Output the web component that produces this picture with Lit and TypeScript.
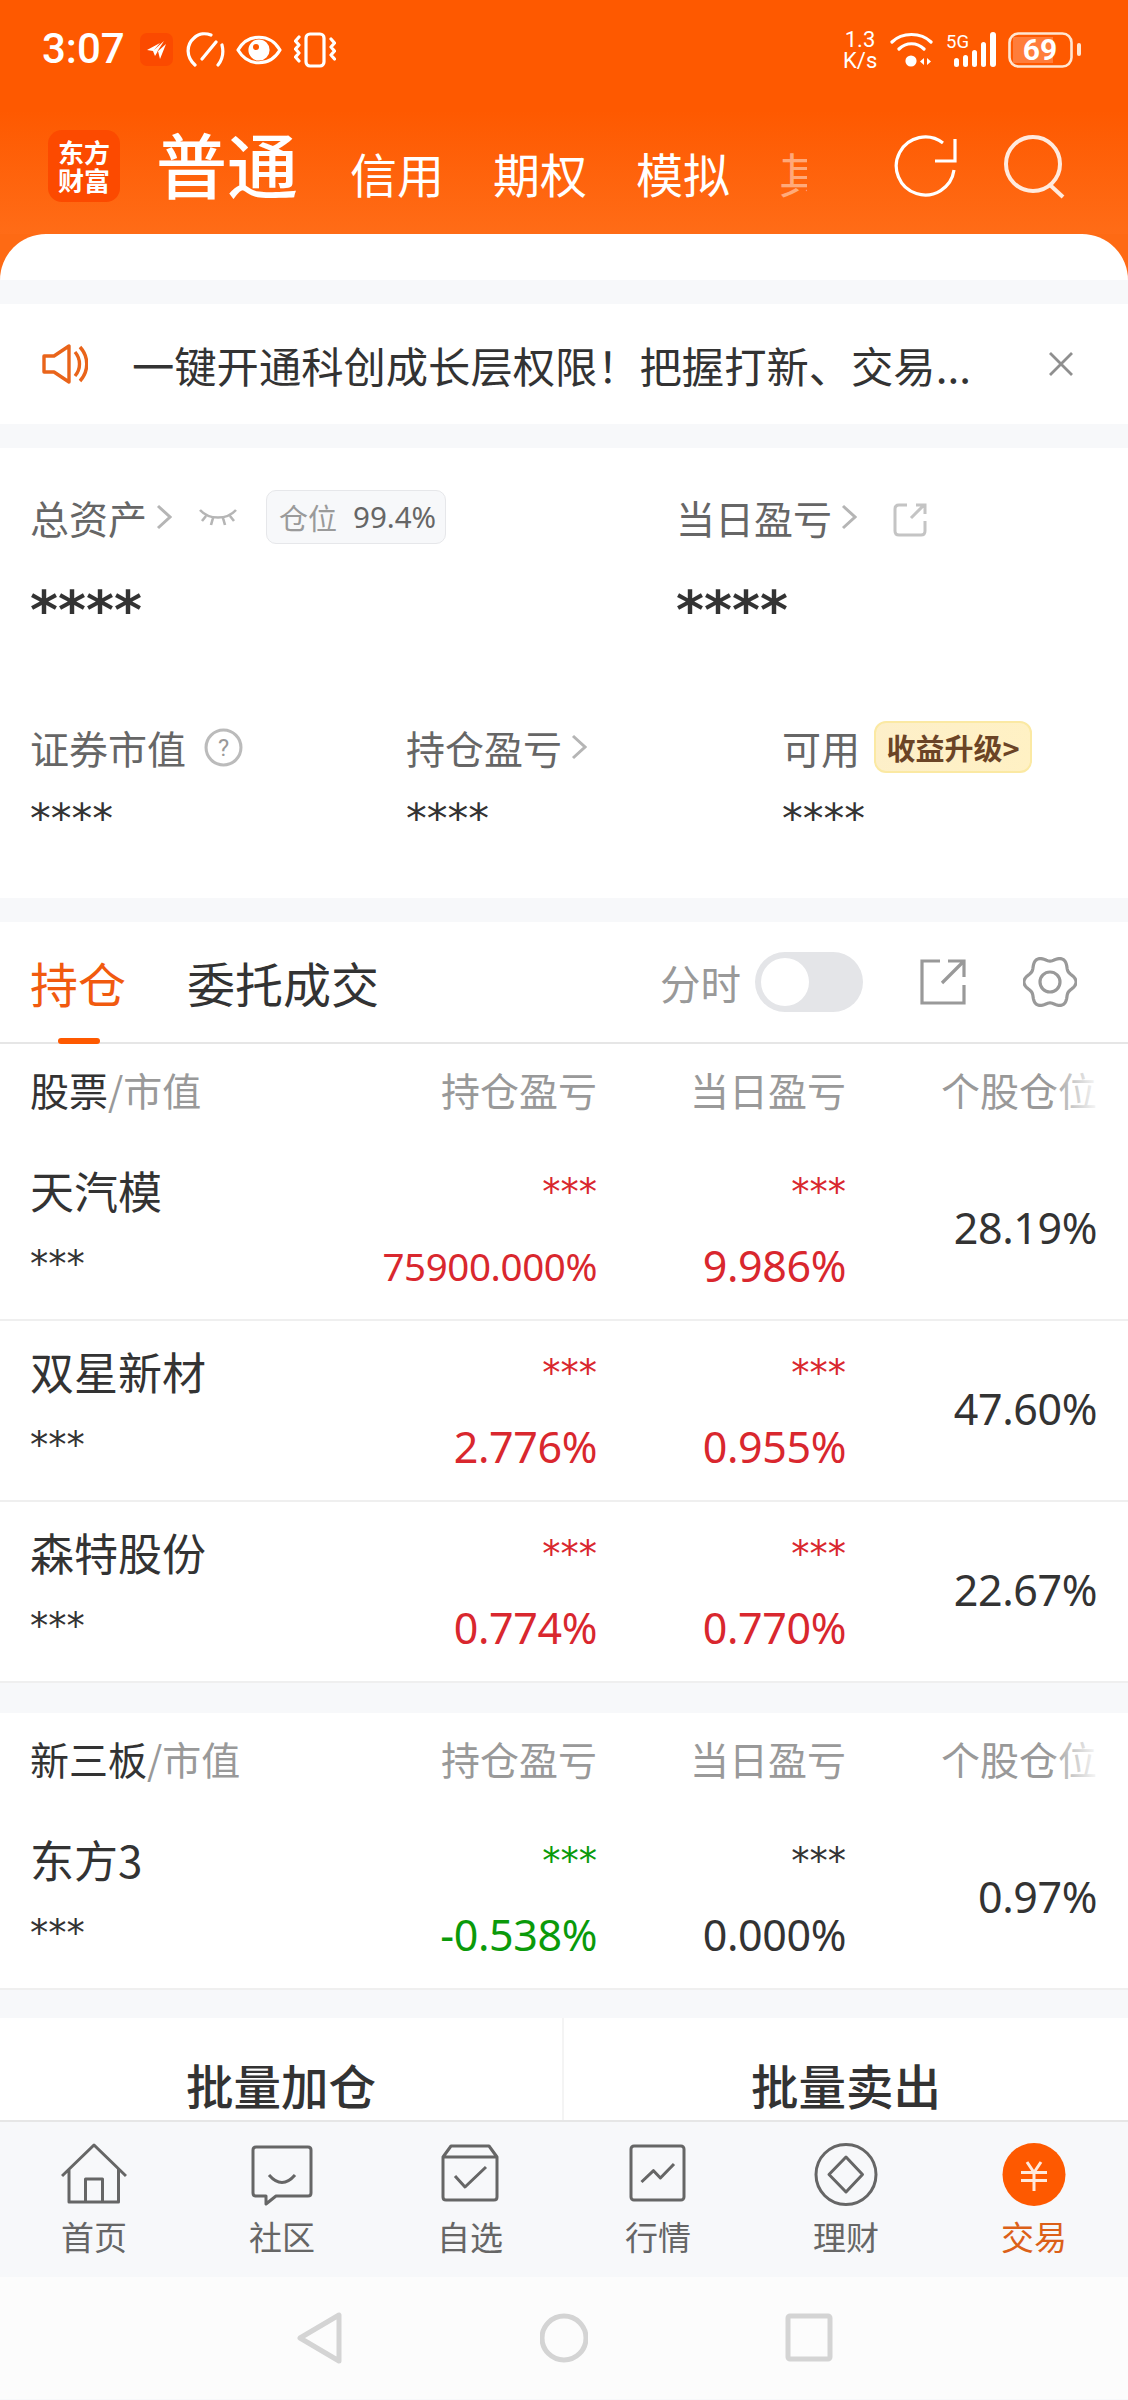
import { LitElement, html, css, svg } from "lit";
import { customElement } from "lit/decorators.js";

const rows1 = [
  { name: "天汽模", a: "75900.000%", b: "9.986%", c: "28.19%", small: true },
  { name: "双星新材", a: "2.776%", b: "0.955%", c: "47.60%" },
  { name: "森特股份", a: "0.774%", b: "0.770%", c: "22.67%" },
];

const chev = html`<svg class="chev" viewBox="0 0 16 26"><path d="M2 2l12 11-12 11" /></svg>`;

const gearPath = (() => {
  const pts: string[] = [];
  for (let i = 0; i < 120; i++) {
    const t = (i / 120) * Math.PI * 2;
    const r = 23.5 - 2.6 * Math.cos(6 * t);
    pts.push(`${(27 + r * Math.sin(t)).toFixed(2)} ${(27 - r * Math.cos(t)).toFixed(2)}`);
  }
  return "M" + pts.join("L") + "Z";
})();

const navIcons = [
  svg`<path d="M1 34L33 3L65 34M8 27V60H57.5V27M24.5 60V37H41.5V60" />`,
  svg`<path d="M7 5H59Q62 5 62 8V51Q62 54 59 54H27L17 62V54H7Q4 54 4 51V8Q4 5 7 5ZM20 33Q33 48 46 33" />`,
  svg`<path d="M6 15L14 4H52L60 15V55Q60 58 57 58H9Q6 58 6 55ZM6 15H60M18 34L28 45L49 25" />`,
  svg`<rect x="6" y="4" width="53" height="54" rx="3"/><path d="M16.5 40L28.5 28.7L35.4 36L49 22" />`,
  svg`<circle cx="33" cy="32.5" r="30" /><path d="M33 15L49.5 32.5L33 50L16 32.5Z" />`,
];

@customElement("app-root")
export class AppRoot extends LitElement {
  static styles = css`
    :host {
      display: block;
      width: 1128px;
      height: 2400px;
      overflow: hidden;
      background: #f7f8fa;
      font-family: "Noto Sans CJK SC", "Noto Sans", sans-serif;
      color: #333;
    }
    svg { display: block; fill: none; }
    .head {
      height: 234px;
      background: linear-gradient(#fe5900 0, #fe5900 110px, #ff6c17 234px);
      display: flex;
      flex-direction: column;
      color: #fff;
    }
    .status {
      height: 100px;
      padding: 32px 47px 0 42px;
      box-sizing: border-box;
      display: flex;
      align-items: flex-start;
    }
    .time { font: 500 42px/34px Roboto, sans-serif; width: 98px; }
    .st-icons { display: flex; align-items: center; gap: 11.5px; height: 35px; }
    .st-right { margin-left: auto; display: flex; align-items: center; gap: 13px; height: 36px; }
    .speed { font: 400 22px/21px Roboto, sans-serif; text-align: center; width: 34px; white-space: nowrap; }
    .squ { width: 33px; height: 33px; background: #fb4a00; border-radius: 7px; display: flex; align-items: center; justify-content: center; }
    .stroke-w { stroke: #fff; stroke-width: 3.2; stroke-linecap: round; stroke-linejoin: round; }
    .tabs {
      flex: 1;
      display: flex;
      align-items: flex-end;
      padding: 0 0 30px 48px;
      position: relative;
    }
    .logo {
      width: 72px; height: 72px; border-radius: 14px; background: #fc4a00;
      font: 700 26px/28px "Noto Sans CJK SC", sans-serif;
      text-align: center; display: flex; align-items: center; justify-content: center;
      margin-bottom: 2px;
      margin-right: 36px;
    }
    .main { font-size: 71px; line-height: 72px; font-weight: 500; margin-right: 50px; margin-bottom: 6px; width: 144px; white-space: nowrap; }
    .t2 { font-size: 47px; line-height: 50px; margin-right: 49px; margin-bottom: 6px; white-space: nowrap; }
    .faded { width: 28px; overflow: hidden; opacity: .45; margin-right: 0; margin-left: 0; }
    .hicons { position: absolute; right: 60px; top: 35px; display: flex; gap: 46px; align-items: center; }
    .cap { height: 46px; background: #fff; border-radius: 46px 46px 0 0; margin-bottom: 24px; }
    .wcap { background: #fe6a14; }

    .notice {
      height: 120px; background: #fff; display: flex; align-items: center;
      padding: 0 53px 0 42px; margin-bottom: 24px;
      font-size: 42.3px; color: #333;
    }
    .notice .txt { margin-left: 44px; flex: 1; white-space: nowrap; }

    .assets { height: 450px; background: #fff; box-sizing: border-box; padding: 44px 30px 0; margin-bottom: 24px; position: relative; }
    .a-top { display: grid; grid-template-columns: 646px 1fr; }
    .lab { display: flex; align-items: center; font-size: 39px; line-height: 50px; color: #666; height: 50px; white-space: nowrap; }
    .chev { width: 16px; height: 26px; margin-left: 9px; stroke: #b5b5b5; stroke-width: 3; fill: none; }
    .eye { margin-left: 27px; stroke: #b5b5b5; stroke-width: 2.6; }
    .ext { margin-left: 36px; margin-top: 5px; stroke: #c4c4c4; stroke-width: 3; }
    .pos { margin-left: 29px; border: 1px solid #e6e7ea; background: #f7f8fa; border-radius: 10px; height: 54px; box-sizing: border-box; padding: 0 12px; display: flex; align-items: center; gap: 16px; font-size: 29px; color: #9a9a9a; width: 180px; }
    .pos .pv { font-family: "Noto Sans", sans-serif; font-size: 29.5px; color: #666; }
    .big { font: 700 53.5px/50px "DejaVu Sans", sans-serif; color: #333; margin-top: 44px; height: 50px; }
    .a-bot { display: grid; grid-template-columns: 376px 376px 1fr; margin-top: 86px; }
    .small { font: 400 41.5px/40px "DejaVu Sans", sans-serif; color: #333; margin-top: 27px; height: 40px; }
    .badge {
      margin-left: 14px; width: 158px; height: 52px; box-sizing: border-box; border-radius: 12px;
      background: linear-gradient(100deg, #fdefc9, #fff1c4);
      border: 2.5px solid #fbe9a3; color: #6b4426; font-size: 29px; font-weight: 700;
      display: flex; align-items: center; justify-content: center; white-space: nowrap;
    }
    .q { margin-left: 18px; width: 39px; height: 39px; }

    .hold { background: #fff; }
    .htabs { height: 120px; display: flex; align-items: center; padding: 0 30px; border-bottom: 2px solid #e6e6e6; position: relative; }
    .ht { font-size: 48px; line-height: 60px; margin-right: 61px; }
    .ht.on { color: #f15a0f; position: relative; }
    .ht.on::after { content: ""; position: absolute; left: 28px; bottom: -32px; width: 42px; height: 6px; background: #fe5900; border-radius: 3px; }
    .right { margin-left: auto; display: flex; align-items: center; }
    .fen { font-size: 40.5px; color: #999; margin-right: 14px; }
    .sw { width: 108px; height: 60px; background: #e4e5e8; border-radius: 30px; padding: 6px; box-sizing: border-box; margin-right: 57px; }
    .sw i { display: block; width: 48px; height: 48px; border-radius: 50%; background: #fff; }
    .ic-a { margin-right: 57px; stroke: #999; stroke-width: 3.2; }
    .ic-b { margin-right: 21px; stroke: #999; stroke-width: 3.2; stroke-linejoin: round; }

    .tb { display: grid; grid-template-columns: 30px 1fr 300px 249px 251px 31px; }
    .thead { height: 96px; padding-bottom: 6px; box-sizing: border-box; align-items: center; background: #fff; }
    .thead > div { font-size: 39px; color: #999; white-space: nowrap; }
    .thead .n { grid-column: 2; color: #999; }
    .thead .n b { font-weight: 400; color: #333; }
    .thead .r { text-align: right; }
    .pos-fade { position: relative; }
    .pos-fade::after { content: ""; position: absolute; right: 0; top: 0; bottom: 0; width: 44px; background: linear-gradient(90deg, rgba(255,255,255,.1), rgba(255,255,255,.92)); }
    .row { height: 179px; border-bottom: 2px solid #efefef; box-sizing: content-box; align-items: stretch; background: #fff; }
    .row:last-child { border-bottom: 0; }
    .cell-n { grid-column: 2; display: flex; flex-direction: column; padding-top: 22px; }
    .nm { font-size: 44px; line-height: 56px; white-space: nowrap; }
    .st { font: 400 36.5px/30px "DejaVu Sans", sans-serif; margin-top: 32px; height: 40px; color: #333; }
    .cell-v { display: flex; flex-direction: column; align-items: flex-end; padding-top: 36px; color: #d9272e; white-space: nowrap; }
    .cell-v .st { margin-top: 0; color: inherit; height: 30px; line-height: 34px; }
    .pct { font: 400 43px/50px "Noto Sans", sans-serif; margin-top: 35px; letter-spacing: -.4px; }
    .pct.sm { font-size: 38.5px; }
    .cell-c { display: flex; align-items: center; justify-content: flex-end; font: 400 43px/50px "Noto Sans", sans-serif; color: #333; letter-spacing: -.4px; padding-bottom: 3px; }
    .green { color: #0a9a0a; }
    .dark { color: #333; }
    .gap { height: 30px; background: #f7f8fa; border-top: 2px solid #efefef; }
    .gap2 { height: 28px; }
    .batch { height: 102px; display: grid; grid-template-columns: 1fr 1fr; background: #fff; }
    .batch div { font-size: 47.5px; text-align: center; line-height: 58px; padding-top: 38px; box-sizing: border-box; font-weight: 500; color: #333; white-space: nowrap; }
    .batch div:first-child { border-right: 2px solid #f4f4f4; }

    .nav { height: 157px; box-sizing: border-box; border-top: 2px solid #e6e6e6; background: #f7f8fa; display: grid; grid-template-columns: repeat(6, 1fr); }
    .nav a { display: flex; flex-direction: column; align-items: center; padding-top: 20px; font-size: 33px; line-height: 44px; color: #666; }
    .nav a.on { color: #dc6018; }
    .nav svg { width: 66px; height: 66px; stroke: #666; stroke-width: 3; stroke-linejoin: round; margin-bottom: 6px; }
    .nav a.on svg { stroke: #ffe9dc; }
    .sys { height: 122px; background: #fcfcfc; display: flex; align-items: center; justify-content: center; gap: 197px; box-sizing: border-box; }
    .sys svg { width: 48px; height: 52px; stroke: #d4d4d4; stroke-width: 5; stroke-linejoin: round; }
  `;

  private valCell(v: string, small = false, cls = "") {
    return html`<div class="cell-v ${cls}"><div class="st">***</div><div class="pct ${small ? "sm" : ""}">${v}</div></div>`;
  }

  render() {
    return html`
      <div class="head">
        <div class="status">
          <div class="time">3:07</div>
          <div class="st-icons">
            <div class="squ"><svg width="24" height="24" viewBox="0 0 24 24"><path d="M2 12L15 5L9 12L19 3L12 14L21 6L15 21L13 13L10 18L8 13Z" fill="#fff"/></svg></div>
            <svg width="40" height="36" viewBox="0 0 40 36" class="stroke-w"><path d="M10 33C1 25 1 13 9 6C14 1 21 1 26 3M37 13C39 21 37 28 33 33M17 27L31 10"/></svg>
            <svg width="46" height="32" viewBox="0 0 46 32" class="stroke-w"><path d="M2 16C12 -1 34 -1 44 16C34 33 12 33 2 16Z"/><circle cx="23" cy="16" r="9" fill="#fff"/><circle cx="20" cy="13" r="3" fill="#fe5900" stroke="none"/></svg>
            <svg width="42" height="36" viewBox="0 0 42 36" class="stroke-w"><rect x="12" y="2" width="18" height="32" rx="4"/><path d="M5 5L1.5 9L5 13L1.5 17L5 21L1.5 25L5 29M37 7L40.5 11L37 15L40.5 19L37 23L40.5 27"/></svg>
          </div>
          <div class="st-right">
            <div class="speed">1.3<br/>K/s</div>
            <svg width="43" height="36" viewBox="0 0 43 36" class="stroke-w" stroke-width="4"><path d="M2 10C12 0 31 0 41 10M9 17C16 10 27 10 34 17"/><circle cx="21" cy="29" r="4" fill="#fff"/><path d="M34 26l-4 3.5 4 3.5zM37 26l4 3.5-4 3.5z" fill="#fff" stroke="none"/></svg>
            <svg width="51" height="36" viewBox="0 0 51 36"><text x="0" y="16" font-size="19" font-family="Roboto" textLength="23" lengthAdjust="spacingAndGlyphs" fill="#fff">5G</text><g fill="#fff"><rect x="8" y="26" width="5" height="9" rx="2.5"/><rect x="17" y="23" width="5" height="12" rx="2.5"/><rect x="26" y="18" width="5" height="17" rx="2.5"/><rect x="35" y="10" width="5" height="25" rx="2.5"/><rect x="44" y="0" width="6" height="35" rx="3"/></g></svg>
            <svg style="margin-left:-2px" width="73" height="36" viewBox="0 0 73 36"><path d="M5 5H45V31H5Z" fill="#ff7d3b"/><rect x="1.5" y="1.5" width="62" height="33" rx="9" stroke="#ffe6d2" stroke-width="2.6"/><text x="32" y="28" text-anchor="middle" font-size="30" font-weight="700" font-family="Roboto" fill="#fff">69</text><rect x="69" y="11" width="4" height="13" rx="2" fill="#ffe6d2"/></svg>
          </div>
        </div>
        <div class="tabs">
          <div class="logo">东方<br/>财富</div>
          <div class="main">普通</div>
          <div class="t2">信用</div>
          <div class="t2">期权</div>
          <div class="t2">模拟</div>
          <div class="t2 faded">其他</div>
          <div class="hicons">
            <svg width="64" height="64" viewBox="0 0 64 64" class="stroke-w" stroke-width="4"><path d="M60 35A29 29 0 1 1 49 8" stroke-linecap="butt"/><path d="M61 4V26H41" stroke-linecap="butt" stroke-linejoin="miter"/></svg>
            <svg width="64" height="64" viewBox="0 0 64 64" stroke="#ffeadd" stroke-width="4"><circle cx="29" cy="29" r="27"/><path d="M46 50L59 62"/></svg>
          </div>
        </div>
      </div>
      <div class="wcap"><div class="cap"></div></div>

      <div class="notice">
        <svg width="46" height="40" viewBox="0 0 46 40" stroke="#e9641a" stroke-width="3.4" stroke-linejoin="round"><path d="M2 12H12L27 2V38L12 28H2Z"/><path d="M33 8C39 15 39 25 33 32M38 3C47 13 47 27 38 37" /></svg>
        <div class="txt">一键开通科创成长层权限！把握打新、交易...</div>
        <svg width="28" height="28" viewBox="0 0 28 28" stroke="#8f8f8f" stroke-width="2.8"><path d="M3 3L25 25M25 3L3 25"/></svg>
      </div>

      <div class="assets">
        <div class="a-top">
          <div>
            <div class="lab">总资产${chev}
              <svg class="eye" width="38" height="20" viewBox="0 0 38 20"><path d="M1 3C10 13 28 13 37 3M7 9L3 14M14 11L12 18M24 11L26 18M31 9L35 14"/></svg>
              <div class="pos"><span>仓位</span><span class="pv">99.4%</span></div>
            </div>
            <div class="big">****</div>
          </div>
          <div>
            <div class="lab">当日盈亏${chev}
              <svg class="ext" width="34" height="34" viewBox="0 0 34 34"><path d="M14 2H6Q2 2 2 6V28Q2 32 6 32H28Q32 32 32 28V18M18 15L31 2M23 2H32V11"/></svg>
            </div>
            <div class="big">****</div>
          </div>
        </div>
        <div class="a-bot">
          <div>
            <div class="lab">证券市值
              <svg class="q" viewBox="0 0 38 38"><circle cx="19" cy="19" r="17" stroke="#bbb" stroke-width="3"/><text x="19" y="27" text-anchor="middle" font-size="23" fill="#999" font-family="Roboto">?</text></svg>
            </div>
            <div class="small">****</div>
          </div>
          <div>
            <div class="lab">持仓盈亏${chev}</div>
            <div class="small">****</div>
          </div>
          <div>
            <div class="lab">可用<div class="badge">收益升级&gt;</div></div>
            <div class="small">****</div>
          </div>
        </div>
      </div>

      <div class="hold">
        <div class="htabs">
          <div class="ht on">持仓</div>
          <div class="ht">委托成交</div>
          <div class="right">
            <div class="fen">分时</div>
            <div class="sw"><i></i></div>
            <svg class="ic-a" width="46" height="46" viewBox="0 0 46 46"><path d="M20 2H2V44H44V26M22 24L43 3M28 2H44V18"/></svg>
            <svg class="ic-b" width="54" height="54" viewBox="0 0 54 54"><path d=${gearPath}/><circle cx="27" cy="27" r="10"/></svg>
          </div>
        </div>
        <div class="tb thead">
          <div class="n"><b>股票</b>/市值</div>
          <div class="r">持仓盈亏</div><div class="r">当日盈亏</div><div class="r pos-fade">个股仓位</div>
        </div>
        ${rows1.map(
          (r) => html`<div class="tb row">
            <div class="cell-n"><div class="nm">${r.name}</div><div class="st">***</div></div>
            ${this.valCell(r.a, r.small)}
            ${this.valCell(r.b)}
            <div class="cell-c">${r.c}</div>
          </div>`
        )}
      </div>
      <div class="gap"></div>
      <div class="hold">
        <div class="tb thead">
          <div class="n"><b>新三板</b>/市值</div>
          <div class="r">持仓盈亏</div><div class="r">当日盈亏</div><div class="r pos-fade">个股仓位</div>
        </div>
        <div class="tb row">
          <div class="cell-n"><div class="nm">东方3</div><div class="st">***</div></div>
          ${this.valCell("-0.538%", false, "green")}
          ${this.valCell("0.000%", false, "dark")}
          <div class="cell-c">0.97%</div>
        </div>
      </div>
      <div class="gap gap2"></div>
      <div class="batch"><div>批量加仓</div><div>批量卖出</div></div>

      <div class="nav">
        ${["首页", "社区", "自选", "行情", "理财"].map(
          (t, i) => html`<a><svg viewBox="0 0 66 66">${navIcons[i]}</svg>${t}</a>`
        )}
        <a class="on"><svg viewBox="0 0 66 66"><circle cx="33" cy="32.5" r="31.5" fill="#fe5900" stroke="none"/><path d="M26 20L33 30.5L40 20M20 30.5H46M20 38.5H46M33 30.5V49"/></svg>交易</a>
      </div>
      <div class="sys">
        <svg viewBox="0 0 48 52"><path d="M44 3V49L5 26Z"/></svg>
        <svg viewBox="0 0 48 52"><circle cx="24" cy="26" r="22"/></svg>
        <svg viewBox="0 0 48 52"><rect x="3" y="4" width="42" height="43" rx="2"/></svg>
      </div>
    `;
  }
}
